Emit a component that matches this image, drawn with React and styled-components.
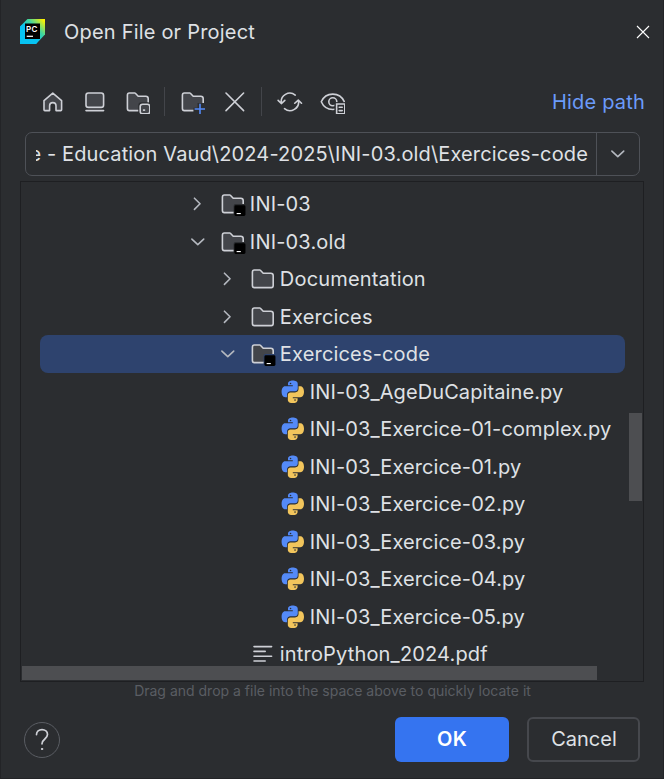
import React from "react";
import styled, { createGlobalStyle } from "styled-components";

const c = {
  bg: "#2b2d30",
  text: "#dfe1e5",
  icon: "#ced0d6",
  chevron: "#b4b8bf",
  iconFill: "#43454a",
  border: "#4e5157",
  dark: "#1e1f22",
  blue: "#3574f0",
  link: "#6b9bfa",
  selected: "#2e436e",
  thumb: "#4d4e51",
  hint: "#5a5d63",
};

const GlobalStyle = createGlobalStyle`
  * { box-sizing: border-box; }
  body { margin: 0; background: ${c.bg}; }
  button { font: inherit; color: inherit; background: none; border: 0; padding: 0; }
`;

const Dialog = styled.div`
  display: flex;
  flex-direction: column;
  width: 664px;
  height: 779px;
  overflow: hidden;
  background: ${c.bg};
  border: 1px solid #232427;
  border-top: 0;
  color: ${c.text};
  font-family: Inter, "Liberation Sans", sans-serif;
  font-size: 20px;
  line-height: 24px;
  white-space: nowrap;
`;

const TitleBar = styled.header`
  display: flex;
  align-items: center;
  height: 63px;
  flex: none;
  padding: 0 13px 0 19px;
`;

const Title = styled.h1`
  flex: 1;
  margin: 0 0 0 18px;
  font-size: 20px;
  font-weight: 400;
  letter-spacing: 0.2px;
`;

const CloseButton = styled.button`
  display: flex;
`;

const Toolbar = styled.div`
  display: flex;
  align-items: center;
  flex: none;
  height: 69px;
  padding: 8px 18px 0 30.6px;
`;

const ToolButton = styled.button`
  display: flex;
  justify-content: center;
  width: 42.4px;
`;

const Separator = styled.span`
  width: 1px;
  height: 29px;
  margin: 0 6.6px 0 5px;
  background: ${c.iconFill};
`;

const PathLink = styled.a`
  margin-left: auto;
  color: ${c.link};
  letter-spacing: 0.2px;
`;

const PathField = styled.div`
  display: flex;
  flex: none;
  width: 615px;
  height: 44px;
  margin-left: 24px;
  border: 1px solid ${c.border};
  border-radius: 7px;
`;

const PathValue = styled.div`
  display: flex;
  justify-content: flex-end;
  align-items: center;
  flex: 1;
  overflow: hidden;
  margin: 0 8px 0 10px;
  letter-spacing: 0.14px;
`;

const PathToggle = styled.button`
  display: flex;
  align-items: center;
  justify-content: center;
  width: 43px;
  border-left: 1px solid ${c.border};
`;

const TreePanel = styled.div`
  position: relative;
  flex: none;
  width: 624px;
  height: 501px;
  margin: 5px 0 0 19px;
  padding: 3.3px 18px 0 19px;
  border: 1px solid ${c.dark};
  overflow: hidden;
`;

const TreeRow = styled.div`
  display: flex;
  align-items: center;
  height: 37.5px;
  padding-left: ${(p) => 145.2 + p.$level * 30}px;
  border-radius: 8px;
  background: ${(p) => (p.$selected ? c.selected : "transparent")};
`;

const Chevron = styled.span`
  display: flex;
  width: 25.6px;
  margin-right: 9.3px;
`;

const RowLabel = styled.span`
  margin-left: 4.2px;
  letter-spacing: ${(p) => (p.$file ? 0.1 : 0.17)}px;
`;

const VerticalThumb = styled.div`
  position: absolute;
  top: 231px;
  right: 1px;
  width: 13px;
  height: 88px;
  background: ${c.thumb};
`;

const HorizontalThumb = styled.div`
  position: absolute;
  left: 1px;
  bottom: 1px;
  width: 575px;
  height: 14px;
  background: ${c.thumb};
`;

const Hint = styled.p`
  margin: 0;
  height: 18px;
  width: 663px;
  line-height: 18px;
  text-align: center;
  font-size: 14px;
  color: ${c.hint};
`;

const Footer = styled.footer`
  display: flex;
  align-items: center;
  gap: 18px;
  margin-top: 17px;
  padding: 0 23px;
  height: 45px;
`;

const HelpButton = styled.button`
  display: flex;
  align-items: center;
  justify-content: center;
  width: 36px;
  height: 36px;
  margin-right: auto;
  border: 1px solid #5a5d63;
  border-radius: 50%;
`;

const ActionButton = styled.button`
  width: ${(p) => (p.$primary ? 114 : 113)}px;
  height: 45px;
  padding: ${(p) => (p.$primary ? "0 0 2px" : "0 0 2px 1px")};
  border-radius: 6px;
  border: ${(p) => (p.$primary ? "0" : `2px solid #46484d`)};
  background: ${(p) => (p.$primary ? c.blue : "transparent")};
  color: ${(p) => (p.$primary ? "#fff" : c.text)};
  font-weight: ${(p) => (p.$primary ? 600 : 400)};
  letter-spacing: ${(p) => (p.$primary ? 0.2 : 0)}px;
`;

const Glyph = styled.svg`
  display: block;
  flex: none;
  width: 25.6px;
  height: 25.6px;
  fill: none;
  stroke: ${c.icon};
  stroke-linecap: round;
  stroke-linejoin: round;
`;

const Icon = ({ children }) => <Glyph viewBox="0 0 16 16">{children}</Glyph>;

const FolderShape = () => (
  <path
    fill={c.iconFill}
    d="M8.106 4.346L8.253 4.5H13C13.828 4.5 14.5 5.172 14.5 6V12.133C14.5 12.953 13.932 13.5 13.267 13.5H2.733C2.068 13.5 1.5 12.953 1.5 12.133V3.867C1.5 3.047 2.068 2.5 2.733 2.5H6.122C6.258 2.5 6.388 2.556 6.483 2.654L8.106 4.346Z"
  />
);

const HomeIcon = () => (
  <Icon>
    <path
      fill={c.iconFill}
      d="M2.5 7.2 8 2.6l5.5 4.6V13a.5.5 0 0 1-.5.5H10V10.5a2 2 0 0 0-4 0v3H3a.5.5 0 0 1-.5-.5z"
    />
  </Icon>
);

const DesktopIcon = () => (
  <Icon>
    <rect x="2.5" y="2.5" width="11" height="9" rx="1.5" fill={c.iconFill} />
    <path d="M2.5 13.5h11" />
  </Icon>
);

const ProjectDirIcon = () => (
  <Icon>
    <FolderShape />
    <rect x="8.3" y="8.3" width="8" height="8" rx="2" fill={c.bg} stroke="none" />
    <rect x="9.5" y="9.5" width="6" height="6" rx="1.5" fill={c.iconFill} />
    <path d="M11.2 13.2h1.4" strokeLinecap="butt" />
  </Icon>
);

const NewFolderIcon = () => (
  <Icon>
    <FolderShape />
    <path d="M8.4 16V11.7H11V8.7h5.5V16z" fill={c.bg} stroke="none" />
    <path d="M12.5 9.5v6M9.5 12.5h6" stroke="#548af7" />
  </Icon>
);

const DeleteIcon = () => (
  <Icon>
    <path d="M2.5 2.5l11 11M13.5 2.5l-11 11" />
  </Icon>
);

const RefreshIcon = () => (
  <Icon>
    <path d="M2.7 8.9A5.4 5.4 0 0 1 11.4 3.8M.7 7.1l2 2 2.2-2M13.4 7.1A5.4 5.4 0 0 1 4.7 12.3M15.3 8.9l-2-2-2.2 2" />
  </Icon>
);

const ShowHiddenIcon = () => (
  <Icon>
    <path d="M.8 8C2.1 5 4.9 3.2 8 3.2S13.9 5 15.2 8C13.9 11 11.1 12.8 8 12.8S2.1 11 .8 8Z" />
    <circle cx="8" cy="8" r="2.5" />
    <path d="M9 8.2h8V16H9z" fill={c.bg} stroke="none" />
    <path d="M10.4 9.4h5.1v6.1h-5.1zM12 11.4h1.9M12 13.5h1.9" strokeLinejoin="miter" />
  </Icon>
);

const FolderIcon = () => (
  <Icon>
    <FolderShape />
  </Icon>
);

const ModuleIcon = ({ cut }) => (
  <Icon>
    <FolderShape />
    <rect x="8.5" y="8.2" width="7.5" height="7.6" rx="1.2" fill={cut} stroke="none" />
    <rect x="9" y="8.9" width="6.9" height="6.7" rx=".9" fill="#000" stroke="none" />
    <path d="M10.4 14.1h2.6" stroke="#fff" strokeWidth=".7" strokeLinecap="butt" />
  </Icon>
);

const snake =
  "M5 3.9V3.1C5 1.5 6.4 1 8 1s3.1.5 3.1 2.1V6c0 1-.7 1.6-1.6 1.6H6.6C5.3 7.6 4.4 8.5 4.4 9.7V11.4H3.3C1.7 11.4 1 9.8 1 8s.7-3.4 2.3-3.4H8V3.9Z";

const PythonIcon = () => (
  <Icon>
    <path d={snake} fill="#548af7" stroke="none" />
    <path d={snake} fill="#f2c55c" stroke="none" transform="rotate(180 8 8)" />
    <circle cx="6.6" cy="2.8" r=".5" fill={c.bg} stroke="none" />
    <circle cx="9.4" cy="13.2" r=".5" fill={c.bg} stroke="none" />
  </Icon>
);

const TextFileIcon = () => (
  <Icon>
    <path d="M2.5 3.5h11M2.5 6.5h7M2.5 9.5h11M2.5 12.5h7" />
  </Icon>
);

const ArrowIcon = ({ open }) => (
  <Icon>
    <path
      stroke={c.chevron}
      d={open ? "M4.3 6.3 8 9.8l3.7-3.5" : "M5.9 4.5 9.4 8l-3.5 3.5"}
    />
  </Icon>
);

const Logo = styled.svg`
  display: block;
  width: 26px;
  height: 25px;
`;

const PyCharmLogo = () => (
  <Logo viewBox="0 0 26 25">
    <defs>
      <linearGradient id="edge" x1="0.35" y1="0.65" x2="0.95" y2="0.05">
        <stop offset="0" stopColor="#07c3f2" />
        <stop offset="0.5" stopColor="#3fd6a0" />
        <stop offset="1" stopColor="#fcf000" />
      </linearGradient>
    </defs>
    <path d="M0 7.5 7.5 0H25V15.5L16 25H0Z" fill="url(#edge)" />
    <path d="M0 7.5 5 4.5V20H20L16 25H0Z" fill="#07c3f2" />
    <rect x="5" y="4.5" width="15" height="15.5" fill="#000" />
    <text x="6" y="12.6" fontSize="8" fontWeight="600" fill="#fff" textLength="11.5">
      PC
    </text>
    <rect x="6.7" y="16.7" width="6.3" height="1.2" fill="#fff" />
  </Logo>
);

const CloseGlyph = styled.svg`
  width: 14px;
  height: 14px;
  stroke: #fff;
  stroke-width: 1.1;
`;

const HelpGlyph = styled.svg`
  width: 36px;
  height: 36px;
  flex: none;
  fill: none;
  stroke: ${c.icon};
  stroke-width: 1.7;
  stroke-linecap: round;
`;

const rows = [
  { name: "INI-03", level: 0, kind: "module", open: false },
  { name: "INI-03.old", level: 0, kind: "module", open: true },
  { name: "Documentation", level: 1, kind: "folder", open: false },
  { name: "Exercices", level: 1, kind: "folder", open: false },
  { name: "Exercices-code", level: 1, kind: "module", open: true, selected: true },
  { name: "INI-03_AgeDuCapitaine.py", level: 2, kind: "python" },
  { name: "INI-03_Exercice-01-complex.py", level: 2, kind: "python" },
  { name: "INI-03_Exercice-01.py", level: 2, kind: "python" },
  { name: "INI-03_Exercice-02.py", level: 2, kind: "python" },
  { name: "INI-03_Exercice-03.py", level: 2, kind: "python" },
  { name: "INI-03_Exercice-04.py", level: 2, kind: "python" },
  { name: "INI-03_Exercice-05.py", level: 2, kind: "python" },
  { name: "introPython_2024.pdf", level: 1, kind: "text" },
];

const kindIcons = {
  module: ModuleIcon,
  folder: FolderIcon,
  python: PythonIcon,
  text: TextFileIcon,
};

function FileRow({ row }) {
  const KindIcon = kindIcons[row.kind];
  return (
    <TreeRow $level={row.level} $selected={row.selected}>
      <Chevron>{row.open !== undefined && <ArrowIcon open={row.open} />}</Chevron>
      <KindIcon cut={row.selected ? c.selected : c.bg} />
      <RowLabel $file={row.kind === "python"}>{row.name}</RowLabel>
    </TreeRow>
  );
}

export default function App() {
  return (
    <Dialog>
      <GlobalStyle />
      <TitleBar>
        <PyCharmLogo />
        <Title>Open File or Project</Title>
        <CloseButton aria-label="Close">
          <CloseGlyph viewBox="0 0 14 14">
            <path d="M1 1l12 12M13 1L1 13" />
          </CloseGlyph>
        </CloseButton>
      </TitleBar>
      <Toolbar>
        <ToolButton><HomeIcon /></ToolButton>
        <ToolButton><DesktopIcon /></ToolButton>
        <ToolButton><ProjectDirIcon /></ToolButton>
        <Separator />
        <ToolButton><NewFolderIcon /></ToolButton>
        <ToolButton><DeleteIcon /></ToolButton>
        <Separator />
        <ToolButton><RefreshIcon /></ToolButton>
        <ToolButton><ShowHiddenIcon /></ToolButton>
        <PathLink>Hide path</PathLink>
      </Toolbar>
      <PathField>
        <PathValue>e - Education Vaud\2024-2025\INI-03.old\Exercices-code</PathValue>
        <PathToggle><ArrowIcon open /></PathToggle>
      </PathField>
      <TreePanel>
        {rows.map((row) => (
          <FileRow key={row.name} row={row} />
        ))}
        <VerticalThumb />
        <HorizontalThumb />
      </TreePanel>
      <Hint>Drag and drop a file into the space above to quickly locate it</Hint>
      <Footer>
        <HelpButton aria-label="Help">
          <HelpGlyph viewBox="0 0 36 36">
            <path d="M12.5 12.6C12.5 9.6 14.9 7.6 18 7.6s5.500 2 5.500 4.900c0 4.500-5.500 4.500-5.500 9.300" />
            <circle cx="18" cy="27" r=".7" fill={c.icon} strokeWidth="1" />
          </HelpGlyph>
        </HelpButton>
        <ActionButton $primary>OK</ActionButton>
        <ActionButton>Cancel</ActionButton>
      </Footer>
    </Dialog>
  );
}
